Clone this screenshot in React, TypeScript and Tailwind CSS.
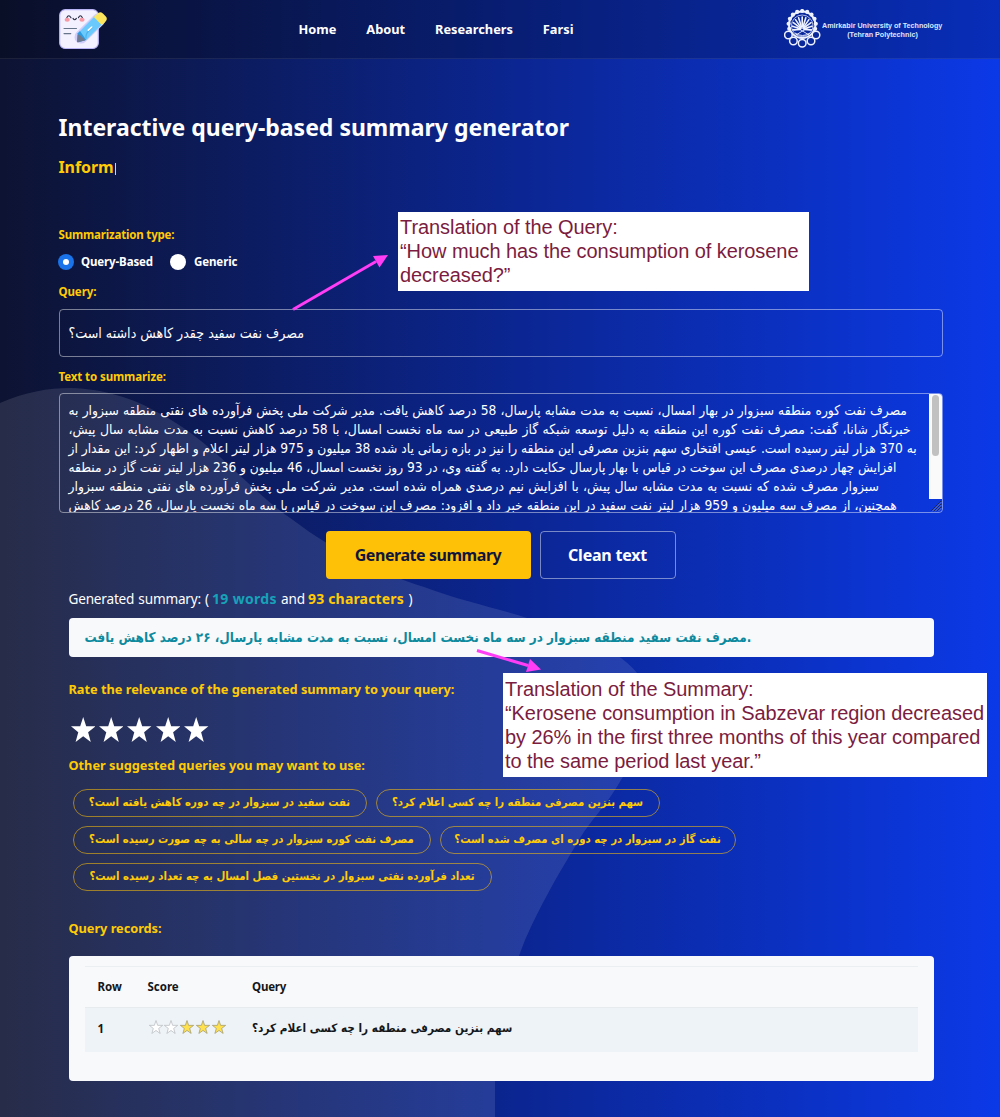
import type { ReactNode } from "react";

const passage: { text: string; cls: string }[] = [
  { cls: "text-[13.7px] [word-spacing:0.22px]", text: "مصرف نفت کوره منطقه سبزوار در بهار امسال، نسبت به مدت مشابه پارسال، 58 درصد کاهش یافت. مدیر شرکت ملی پخش فرآورده های نفتی منطقه سبزوار به" },
  { cls: "text-[13.8px] [word-spacing:0.5px]", text: "خبرنگار شانا، گفت: مصرف نفت کوره این منطقه به دلیل توسعه شبکه گاز طبیعی در سه ماه نخست امسال، با 58 درصد کاهش نسبت به مدت مشابه سال پیش،" },
  { cls: "text-[13.7px] [word-spacing:-0.1px]", text: "به 370 هزار لیتر رسیده است. عیسی افتخاری سهم بنزین مصرفی این منطقه را نیز در بازه زمانی یاد شده 38 میلیون و 975 هزار لیتر اعلام و اظهار کرد: این مقدار از" },
  { cls: "text-[13.6px] [word-spacing:-0.1px]", text: "افزایش چهار درصدی مصرف این سوخت در قیاس با بهار پارسال حکایت دارد. به گفته وی، در 93 روز نخست امسال، 46 میلیون و 236 هزار لیتر نفت گاز در منطقه" },
  { cls: "text-[13.8px] [word-spacing:0.4px]", text: "سبزوار مصرف شده که نسبت به مدت مشابه سال پیش، با افزایش نیم درصدی همراه شده است. مدیر شرکت ملی پخش فرآورده های نفتی منطقه سبزوار" },
  { cls: "text-[13.7px] [word-spacing:0.06px]", text: "همچنین، از مصرف سه میلیون و 959 هزار لیتر نفت سفید در این منطقه خبر داد و افزود: مصرف این سوخت در قیاس با سه ماه نخست پارسال، 26 درصد کاهش" },
];

const suggestions: string[][] = [
  ["نفت سفید در سبزوار در چه دوره کاهش یافته است؟", "سهم بنزین مصرفی منطقه را چه کسی اعلام کرد؟"],
  ["مصرف نفت کوره سبزوار در چه سالی به چه صورت رسیده است؟", "نفت گاز در سبزوار در چه دوره ای مصرف شده است؟"],
  ["تعداد فرآورده نفتی سبزوار در نخستین فصل امسال به چه تعداد رسیده است؟"],
];
const chipWidths = [["w-[294px]", "w-[284px]"], ["w-[358px]", "w-[296px]"], ["w-[419px]"]];

const arabic = "font-['DejaVu_Sans_Condensed','DejaVu_Sans',sans-serif]";
const STAR = "M12 1.2 14.8 9.2H23.4L16.6 14.3 19.1 22.6 12 17.6 4.9 22.6 7.4 14.3 0.6 9.2H9.2Z";

function Label({ children, className = "" }: { children: ReactNode; className?: string }) {
  return <div className={`font-bold whitespace-nowrap text-[#ffcb05] ${className}`}>{children}</div>;
}

function Backdrop() {
  return (
    <svg className="absolute inset-0" width="1000" height="1117" viewBox="0 0 1000 1117" aria-hidden="true">
      <path
        d="M0 403C25 392 48 388 71 388C104 389 135 399 155 411C213 440 247 489 293 520C335 552 378 572 424 587C461 601 497 608 527 618C583 634 622 651 641 678C656 705 642 748 621 780C605 808 590 820 576 845C556 878 540 906 525 940C507 985 495 1036 495 1090V1117H0Z"
        fill="#ffffff"
        fillOpacity="0.11"
      />
    </svg>
  );
}

function NoteLogo() {
  return (
    <svg width="50" height="42" viewBox="0 0 50 42" aria-hidden="true">
      <rect x="0.7" y="0.7" width="38.6" height="38.8" rx="5.5" fill="#f3f0ff" stroke="#b9b4f5" strokeWidth="1.2" />
      <path d="M40 10.5 22 28" stroke="#cfcdfb" strokeWidth="13" strokeLinecap="round" />
      <path d="M36 7 43.5 14.8 27.2 31 18.2 33.3 18.8 24.2Z" fill="#6cc9fb" />
      <path d="M27.2 31 18.2 33.3 18.8 24.2 21 22Z" fill="#2b9be4" />
      <path d="M38.2 4.9Q41 1.9 43.9 4.6L46.6 7.3Q49.2 10 46.4 12.7L42.7 16 34.8 8Z" fill="#fbe55c" />
      <path d="M18.7 25.4Q21.5 25.2 22.7 28Q25.6 28.6 26 31.6L19.2 33.3Q18 33.3 18.1 32.2Z" fill="#6e7b90" />
      <path d="M27 29.5Q26.4 25 30 21.8L34 17.8" stroke="#4bb2ef" strokeWidth="1.2" fill="none" />
      <path d="M29.3 21.2 32.8 18" stroke="#fff" strokeWidth="1.6" strokeLinecap="round" />
      <path d="M7.8 8.8Q9.6 4.8 12 8.8M19.4 8.8Q21.4 4.8 23.4 8.8M14 9.4Q15.6 12 17.4 9.4" stroke="#2c3044" strokeWidth="1.1" fill="none" strokeLinecap="round" />
      <ellipse cx="8.2" cy="10.8" rx="2.6" ry="2" fill="#f79aa6" />
      <ellipse cx="23" cy="10.8" rx="2.6" ry="2" fill="#f79aa6" />
      <path d="M5 19.5H17.5M5 24.6H11.8" stroke="#66758a" strokeWidth="1.1" strokeLinecap="round" />
    </svg>
  );
}

function UniversityEmblem() {
  const angles = Array.from({ length: 11 }, (_, i) => Math.PI * (0.9 + (i * 1.2) / 10));
  return (
    <svg width="38" height="39" viewBox="0 0 38 39" aria-hidden="true" fill="none" stroke="#eef2ff">
      <circle cx="18.2" cy="15.8" r="13.2" strokeWidth="2" />
      <circle cx="18.2" cy="16.8" r="10.8" strokeWidth="0.7" />
      {angles.map((a) => (
        <circle key={a} cx={18.2 + 13.6 * Math.cos(a)} cy={15.6 + 13.6 * Math.sin(a)} r="2.1" fill="#eef2ff" stroke="none" />
      ))}
      {angles.map((a) => (
        <path key={a} d={`M${18.2 + 2 * Math.cos(a)} ${19.8 + 2 * Math.sin(a)}L${18.2 + 9.8 * Math.cos(a)} ${17.8 + 9.8 * Math.sin(a)}`} strokeWidth="1.6" strokeLinecap="round" />
      ))}
      <path d="M10 21Q18 18 27 21M11 24Q18.5 29 26 24M12 18 25 26M25 18 12 26" strokeWidth="0.9" />
      {[[4.4, 26], [9.4, 32], [18.2, 34.2], [27, 32], [32, 26]].map(([x, y]) => (
        <circle key={x} cx={x} cy={y} r="3.8" strokeWidth="1.5" fill="#0a2899" />
      ))}
    </svg>
  );
}

function Header() {
  return (
    <header className="relative flex h-[59px] shrink-0 border-b border-white/8 bg-black/20 pl-[59px]">
      <div className="mt-[9px] w-[239.5px]"><NoteLogo /></div>
      <nav className="flex w-[485.5px] gap-[29.9px] pt-[18.5px] text-[12.8px] leading-5 font-bold text-white">
        <a>Home</a>
        <a>About</a>
        <a>Researchers</a>
        <a>Farsi</a>
      </nav>
      <div className="mt-[9px] flex">
        <UniversityEmblem />
        <div className="mt-[12px] w-[121px] text-center font-['Liberation_Sans',sans-serif] text-[7.2px] leading-[9px] font-bold whitespace-nowrap text-[#dfe6ff]">
          <div className="origin-left scale-x-[0.995]">Amirkabir University of Technology</div>
          <div>(Tehran Polytechnic)</div>
        </div>
      </div>
    </header>
  );
}

function Note({ lines, className }: { lines: string[]; className: string }) {
  return (
    <div className={`absolute bg-white font-['Liberation_Sans',sans-serif] text-[20px] leading-[24px] tracking-[-0.07px] whitespace-nowrap text-[#7b1c40] ${className}`}>
      {lines.map((l) => <div key={l}>{l}</div>)}
    </div>
  );
}

function Passage() {
  return (
    <div className="relative mt-[8px] h-[120px] w-[884px] overflow-hidden rounded-[4px] border border-white/45 pt-[7px] pl-[9px]">
      {passage.map((l) => (
        <div key={l.text} className="flex h-[19px]">
          <span dir="rtl" className={`${arabic} ${l.cls} leading-[19px] whitespace-nowrap text-white`}>{l.text}</span>
        </div>
      ))}
      <div className="absolute top-0 right-0 h-[105px] w-[13px] bg-[#fafafa] pt-[1px] pl-[3px]">
        <div className="h-[61px] w-[7px] rounded-full bg-[#c1c1c1]" />
      </div>
      <svg className="absolute right-0 bottom-0" width="12" height="12" viewBox="0 0 12 12" stroke="#1a2450" strokeWidth="0.9">
        <path d="M1 11 11 1M4 11 11 4M7 11 11 7" />
        <path d="M2 11.5 11.5 2M5 11.5 11.5 5M8 11.5 11.5 8" stroke="#aab4dd" strokeWidth="0.5" />
      </svg>
    </div>
  );
}

export default function App() {
  return (
    <div className="relative flex h-[1117px] w-[1000px] flex-col overflow-hidden bg-linear-to-r/srgb from-[#0d1332] via-[#0b258f] to-[#0b39e7] font-['Noto_Sans',sans-serif]">
      <Backdrop />
      <Header />
      <main className="relative flex flex-col pl-[58.5px]">
        <h1 className="mt-[52.5px] text-[23px] leading-[30px] font-bold whitespace-nowrap text-white">Interactive query-based summary generator</h1>
        <div className="mt-[12px] flex h-[26px] items-center">
          <span className="text-[16px] leading-[26px] font-bold tracking-[-0.1px] text-[#ffcb05]">Inform</span>
          <span className="mt-[4px] ml-[2px] h-[12px] w-px bg-white/80" />
        </div>

        <Label className="mt-[47.5px] text-[11.5px] leading-[16px] tracking-[-0.18px]">Summarization type:</Label>
        <div className="mt-[11px] -ml-[1px] flex h-[16px] items-center text-[11.5px] font-bold text-white">
          <span className="flex size-[16px] items-center justify-center rounded-full bg-[#1a73e8]"><span className="size-[6px] rounded-full bg-white" /></span>
          <span className="ml-[7.5px] w-[89px] tracking-[-0.12px]">Query-Based</span>
          <span className="size-[16px] rounded-full bg-white" />
          <span className="ml-[8px] tracking-[-0.1px]">Generic</span>
        </div>
        <Label className="mt-[14px] text-[11.5px] leading-[16px] tracking-[-0.1px]">Query:</Label>
        <div className="mt-[9px] flex h-[48px] w-[884px] items-center rounded-[4px] border border-white/45 pt-[1px] pl-[9px]">
          <span dir="rtl" className={`${arabic} text-[14.1px] text-white`}>مصرف نفت سفید چقدر کاهش داشته است؟</span>
        </div>
        <Label className="mt-[12px] text-[11.5px] leading-[16px] tracking-[-0.1px]">Text to summarize:</Label>
        <Passage />

        <div className="mt-[18px] ml-[267px] flex gap-[9px] text-[16px] font-bold">
          <button className="h-[48px] w-[205px] rounded-[4px] bg-[#ffc107] tracking-[-0.44px] text-[#12163a]">Generate summary</button>
          <button className="h-[48px] w-[136px] rounded-[4px] border border-white/45 tracking-[-0.22px] text-white">Clean text</button>
        </div>

        <div className="flex flex-col pl-[10px]">
          <div className="mt-[10px] flex h-[20px] items-center text-[13.6px] leading-[20px] whitespace-pre text-white">
            <span className="w-[143.5px] tracking-[-0.2px] [word-spacing:0.8px]">Generated summary: ( </span>
            <b className="w-[69px] text-[14px] tracking-[0.33px] text-[#17a2b8]">19 words</b>
            <span className="w-[27px] tracking-[-0.2px]">and </span>
            <b className="text-[14px] tracking-[0.18px] text-[#ffcb05]">93 characters</b>
            <span className="pl-[1px]"> )</span>
          </div>
          <div className="mt-[9px] flex h-[39px] w-[865px] items-center rounded-[4px] bg-[#f8f9fa] pt-[1px] pl-[16px]">
            <span dir="ltr" className={`${arabic} text-[13.44px] font-bold whitespace-nowrap text-[#0e8a9e]`}>مصرف نفت سفید منطقه سبزوار در سه ماه نخست امسال، نسبت به مدت مشابه پارسال، ۲۶ درصد کاهش یافت.</span>
          </div>
          <Label className="mt-[21.5px] text-[12.8px] leading-[20px] tracking-[-0.02px]">Rate the relevance of the generated summary to your query:</Label>
          <div className="mt-[18px] flex h-[26px] gap-[4.1px] pl-[2px]">
            {[0, 1, 2, 3, 4].map((i) => (
              <svg key={i} width="24.4" height="25" viewBox="0.6 1.2 22.8 21.4" preserveAspectRatio="none"><path d={STAR} fill="#fff" /></svg>
            ))}
          </div>
          <Label className="mt-[12px] text-[12.8px] leading-[20px] tracking-[-0.03px]">Other suggested queries you may want to use:</Label>
          <div className="mt-[14.5px] ml-[4px] flex flex-col gap-[9px]">
            {suggestions.map((row, r) => (
              <div key={r} className="flex gap-[9px]">
                {row.map((q, c) => (
                  <div key={q} className={`flex h-[28px] shrink-0 items-center justify-center rounded-full border border-[#ffc107]/55 pt-[1px] ${chipWidths[r][c]}`}>
                    <span dir="rtl" className={`${arabic} text-[11.27px] font-bold whitespace-nowrap text-[#ffcb05]`}>{q}</span>
                  </div>
                ))}
              </div>
            ))}
          </div>
          <Label className="mt-[26.5px] text-[12.8px] leading-[20px] tracking-[-0.05px]">Query records:</Label>
          <div className="mt-[18px] h-[125px] w-[865px] rounded-[4px] bg-[#f8f9fa] px-[16px] pt-[10px] text-[11.5px] font-bold text-[#14171a]">
            <div className="flex h-[41px] items-center border-t border-[#eceff1] pl-[13px]">
              <span className="w-[50px]">Row</span>
              <span className="w-[104.5px]">Score</span>
              <span className="tracking-[-0.2px]">Query</span>
            </div>
            <div className="flex h-[45px] items-center border-t border-[#e7ebee] bg-[#eef3f7] pb-[2px] pl-[13px]">
              <span className="w-[50px]">1</span>
              <span className="mb-[3px] flex w-[104.5px] gap-[1.8px] pl-[1px]">
                {[0, 0, 1, 1, 1].map((on, i) => (
                  <svg key={i} width="14" height="14" viewBox="0 0.3 24 23.2" preserveAspectRatio="none"><path d={STAR} fill={on ? "#ffe04d" : "#fff"} stroke={on ? "#9c9773" : "#b5b9bd"} strokeWidth="1.2" /></svg>
                ))}
              </span>
              <span dir="rtl" className={`${arabic} text-[11.68px] whitespace-nowrap`}>سهم بنزین مصرفی منطقه را چه کسی اعلام کرد؟</span>
            </div>
          </div>
        </div>
      </main>

      <svg className="absolute inset-0" width="1000" height="1117" viewBox="0 0 1000 1117" aria-hidden="true">
        <g stroke="#ff3df5" strokeWidth="3" fill="#ff3df5">
          <path d="M293 309.5 376 261.5" />
          <path d="M388 255 379.5 267.5 373 256Z" stroke="none" />
          <path d="M477 650.5 528 665.5" />
          <path d="M541 669.5 526 672 530 659Z" stroke="none" />
        </g>
      </svg>
      <Note className="top-[212px] left-[398px] h-[79px] w-[411px] pt-[3px] pl-[2px]" lines={["Translation of the Query:", "“How much has the consumption of kerosene", "decreased?”"]} />
      <Note className="top-[673px] left-[503px] h-[104px] w-[484px] pt-[4px] pl-[2px]" lines={["Translation of the Summary:", "“Kerosene consumption in Sabzevar region decreased", "by 26% in the first three months of this year compared", "to the same period last year.”"]} />
    </div>
  );
}
